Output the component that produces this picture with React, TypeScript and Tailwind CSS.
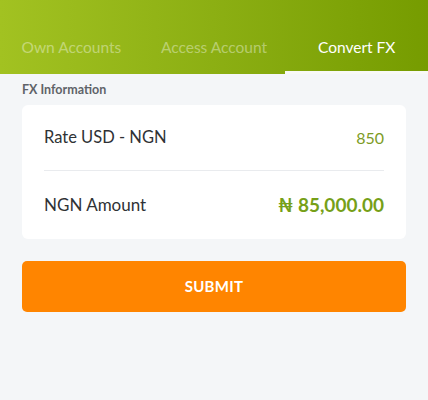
const tabs = ["Own Accounts", "Access Account", "Convert FX"];

export default function App() {
  const active = 2;

  return (
    <div
      className="min-h-[400px] bg-[#f4f6f8]"
      style={{ fontFamily: "Lato, 'Noto Sans', sans-serif" }}
    >
      {/* Header with tabs */}
      <div className="h-[74px] bg-gradient-to-r from-[#a2c221] to-[#769c00] flex items-end">
        {tabs.map((t, i) => (
          <div
            key={t}
            className={`flex-1 h-[50px] flex items-center justify-center text-[15.5px] ${
              i === active
                ? "text-white border-b-[3px] border-[#f8f9f6]"
                : "text-white/40 border-b-[3px] border-transparent"
            }`}
          >
            {t}
          </div>
        ))}
      </div>

      <div className="px-[22px]">
        <p className="pt-[8px] text-[12.5px] font-bold text-[#5f6368] leading-[16px]">
          FX Information
        </p>

        {/* Card */}
        <div className="mt-[7px] bg-white rounded-[6px] px-[22px]">
          <div className="h-[66px] flex items-center justify-between border-b border-[#e9ebee]">
            <span className="text-[16.5px] text-[#2f3235]">Rate USD - NGN</span>
            <span className="text-[16px] text-[#7d9c25]">850</span>
          </div>
          <div className="h-[68px] flex items-center justify-between">
            <span className="text-[17px] text-[#2f3235]">NGN Amount</span>
            <span className="text-[19px] font-bold text-[#76a018]">
              ₦ 85,000.00
            </span>
          </div>
        </div>

        <button className="mt-[22px] w-full h-[51px] rounded-[5px] bg-[#ff8500] text-white text-[15px] font-bold tracking-[0.3px]">
          SUBMIT
        </button>
      </div>
    </div>
  );
}
